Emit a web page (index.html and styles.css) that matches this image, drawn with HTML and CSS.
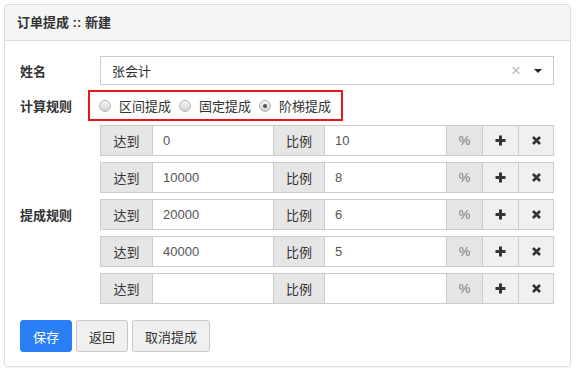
FILE: index.html
```html
<!DOCTYPE html>
<html lang="zh-CN">
<head>
  <meta charset="UTF-8" />
  <title>订单提成 :: 新建</title>
  <link rel="stylesheet" href="styles.css">
</head>
<body>
  <div class="panel">
    <div class="panel-heading">订单提成 :: 新建</div>
    <div class="panel-body">
      <div class="form-row row-name">
        <label class="form-label">姓名</label>
        <div class="select-box">
          <span class="select-text">张会计</span>
          <span class="select-clear">×</span>
          <span class="select-caret"></span>
        </div>
      </div>

      <div class="form-row row-mode">
        <label class="form-label">计算规则</label>
        <div class="radio-group">
          <span class="radio"><i class="dot"></i>区间提成</span>
          <span class="radio"><i class="dot"></i>固定提成</span>
          <span class="radio checked"><i class="dot"></i>阶梯提成</span>
        </div>
      </div>

      <div class="form-row row-rules">
        <label class="form-label">提成规则</label>
        <div class="rules">
          <div class="rule">
            <span class="addon">达到</span><span class="field">0</span>
            <span class="addon">比例</span><span class="field">10</span>
            <span class="addon pct">%</span>
            <span class="btn-icon"><svg width="11" height="11" viewBox="0 0 11 11"><path d="M5.5 0.5v10M0.5 5.5h10" stroke="#333" stroke-width="3"/></svg></span>
            <span class="btn-icon"><svg width="9" height="9" viewBox="0 0 9 9"><path d="M1 1l7 7M8 1l-7 7" stroke="#333" stroke-width="2.6"/></svg></span>
          </div>
          <div class="rule">
            <span class="addon">达到</span><span class="field">10000</span>
            <span class="addon">比例</span><span class="field">8</span>
            <span class="addon pct">%</span>
            <span class="btn-icon"><svg width="11" height="11" viewBox="0 0 11 11"><path d="M5.5 0.5v10M0.5 5.5h10" stroke="#333" stroke-width="3"/></svg></span>
            <span class="btn-icon"><svg width="9" height="9" viewBox="0 0 9 9"><path d="M1 1l7 7M8 1l-7 7" stroke="#333" stroke-width="2.6"/></svg></span>
          </div>
          <div class="rule">
            <span class="addon">达到</span><span class="field">20000</span>
            <span class="addon">比例</span><span class="field">6</span>
            <span class="addon pct">%</span>
            <span class="btn-icon"><svg width="11" height="11" viewBox="0 0 11 11"><path d="M5.5 0.5v10M0.5 5.5h10" stroke="#333" stroke-width="3"/></svg></span>
            <span class="btn-icon"><svg width="9" height="9" viewBox="0 0 9 9"><path d="M1 1l7 7M8 1l-7 7" stroke="#333" stroke-width="2.6"/></svg></span>
          </div>
          <div class="rule">
            <span class="addon">达到</span><span class="field">40000</span>
            <span class="addon">比例</span><span class="field">5</span>
            <span class="addon pct">%</span>
            <span class="btn-icon"><svg width="11" height="11" viewBox="0 0 11 11"><path d="M5.5 0.5v10M0.5 5.5h10" stroke="#333" stroke-width="3"/></svg></span>
            <span class="btn-icon"><svg width="9" height="9" viewBox="0 0 9 9"><path d="M1 1l7 7M8 1l-7 7" stroke="#333" stroke-width="2.6"/></svg></span>
          </div>
          <div class="rule">
            <span class="addon">达到</span><span class="field"></span>
            <span class="addon">比例</span><span class="field"></span>
            <span class="addon pct">%</span>
            <span class="btn-icon"><svg width="11" height="11" viewBox="0 0 11 11"><path d="M5.5 0.5v10M0.5 5.5h10" stroke="#333" stroke-width="3"/></svg></span>
            <span class="btn-icon"><svg width="9" height="9" viewBox="0 0 9 9"><path d="M1 1l7 7M8 1l-7 7" stroke="#333" stroke-width="2.6"/></svg></span>
          </div>
        </div>
      </div>

      <div class="actions">
        <button class="btn btn-primary">保存</button>
        <button class="btn">返回</button>
        <button class="btn btn-wide">取消提成</button>
      </div>
    </div>
  </div>
</body>
</html>
```

FILE: styles.css
```css
body {
  margin: 0;
  padding: 4px;
  font-family: "Liberation Sans", "Noto Sans CJK SC", sans-serif;
  font-size: 13px;
  color: #333;
  background: #fff;
}

.panel {
  width: 565px;
  border: 1px solid #ddd;
  border-radius: 4px;
  box-shadow: 0 1px 2px rgba(0, 0, 0, 0.06);
}

.panel-heading {
  height: 35px;
  line-height: 35px;
  padding: 0 12px;
  background: #f5f5f5;
  border-bottom: 1px solid #ddd;
  border-radius: 4px 4px 0 0;
  font-weight: bold;
  color: #333;
}

.panel-body {
  padding: 15px 16px 14px 15px;
}

.form-row {
  display: flex;
  align-items: center;
}

.form-label {
  width: 80px;
  flex: none;
  font-weight: bold;
  color: #333;
}

.row-mode {
  margin-top: 5px;
}
.row-mode .form-label {
  width: 68px;
}

.row-rules {
  margin-top: 4px;
}

/* select */
.select-box {
  width: 454px;
  height: 29px;
  box-sizing: border-box;
  border: 1px solid #ccc;
  display: flex;
  align-items: center;
  padding: 0 11px;
}
.select-text {
  flex: 1;
  color: #333;
}
.select-clear {
  color: #bbb;
  font-size: 17px;
  margin-right: 13px;
}
.select-caret {
  width: 0;
  height: 0;
  border-left: 4px solid transparent;
  border-right: 4px solid transparent;
  border-top: 4px solid #222;
}

/* radios */
.radio-group {
  display: flex;
  align-items: center;
  box-sizing: border-box;
  width: 255px;
  height: 31px;
  border: 2px solid #e8151b;
  padding: 0 0 0 9px;
  white-space: nowrap;
}
.radio {
  display: inline-flex;
  align-items: center;
  margin-right: 8px;
  color: #333;
}
.radio .dot {
  flex: none;
  box-sizing: border-box;
  width: 12px;
  height: 12px;
  border-radius: 50%;
  border: 1px solid #b5b5b5;
  background: linear-gradient(#f6f6f6, #d2d2d2);
  margin-right: 8px;
  position: relative;
}
.radio.checked .dot::after {
  content: "";
  position: absolute;
  left: 3px;
  top: 3px;
  width: 4px;
  height: 4px;
  border-radius: 50%;
  background: #555;
}

/* rule rows */
.rules {
  width: 454px;
}
.rule {
  display: grid;
  grid-template-columns: 51px 121px 51px 122px 36px 36px 1fr;
  height: 31px;
  box-sizing: border-box;
  border: 1px solid #ccc;
  margin-bottom: 6px;
}
.rule:last-child {
  margin-bottom: 0;
}
.rule > span {
  border-left: 1px solid #ccc;
  display: flex;
  align-items: center;
}
.rule > span:first-child {
  border-left: none;
}
.addon {
  background: #e6e6e6;
  justify-content: center;
  color: #333;
}
.addon.pct {
  color: #777;
}
.field {
  background: #fff;
  padding-left: 10px;
  color: #555;
}
.btn-icon {
  background: #f0f0f0;
  justify-content: center;
}

/* buttons */
.actions {
  display: flex;
  gap: 4px;
  margin-top: 16px;
}
.btn {
  width: 52px;
  height: 32px;
  border: 1px solid #c8c8c8;
  border-radius: 3px;
  background: #f0f0f0;
  color: #333;
  font-family: inherit;
  font-size: 13px;
  padding: 0;
}
.btn-primary {
  background: #2b7ff5;
  border-color: #2b7ff5;
  color: #fff;
}
.btn-wide {
  width: 78px;
}
```
